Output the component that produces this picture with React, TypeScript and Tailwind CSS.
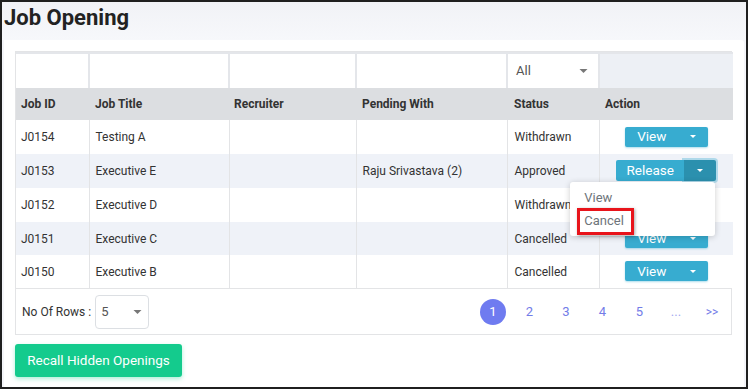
import React from 'react'

interface Opening {
  id: string
  title: string
  recruiter: string
  pending: string
  status: string
  action: string
}

const openings: Opening[] = [
  { id: 'J0154', title: 'Testing A', recruiter: '', pending: '', status: 'Withdrawn', action: 'View' },
  { id: 'J0153', title: 'Executive E', recruiter: '', pending: 'Raju Srivastava (2)', status: 'Approved', action: 'Release' },
  { id: 'J0152', title: 'Executive D', recruiter: '', pending: '', status: 'Withdrawn', action: 'View' },
  { id: 'J0151', title: 'Executive C', recruiter: '', pending: '', status: 'Cancelled', action: 'View' },
  { id: 'J0150', title: 'Executive B', recruiter: '', pending: '', status: 'Cancelled', action: 'View' },
]

const rowHeights = ['h-[34px]', 'h-[34px]', 'h-[34px]', 'h-[33px]', 'h-[33px]']

function Caret({ className }: { className: string }) {
  return (
    <svg width="8" height="4" viewBox="0 0 8 4" className={className}>
      <path d="M0 0 L8 0 L4 4 Z" fill="currentColor" />
    </svg>
  )
}

function SplitButton({ label, open }: { label: string; open: boolean }) {
  if (open) {
    return (
      <div className="relative flex h-[21px] w-[100px]">
        <div className="flex w-[68px] items-center justify-center rounded-l-[2px] bg-[#37acd0] text-[13.5px] text-white">
          {label}
        </div>
        <div className="flex w-[32px] items-center justify-center rounded-r-[2px] bg-[#2b90ae] shadow-[0_0_0_2px_rgba(56,172,208,0.35)]">
          <Caret className="h-[3px] w-[6px] text-white" />
        </div>
        <div className="absolute left-[-46px] top-[22px] z-10 flex h-[54px] w-[145px] flex-col rounded-[3px] bg-white pl-[14px] pt-[8px] text-[13px] text-[#6e747a] shadow-[0_1px_6px_rgba(0,0,0,0.2)]">
          <div className="leading-[16px]">View</div>
          <div className="relative mt-[7px] leading-[16px]">
            Cancel
            <div className="absolute left-[-7px] top-[-5px] h-[27px] w-[57px] border-[3px] border-[#e8141b] shadow-[1px_1px_3px_rgba(0,0,0,0.35)]" />
          </div>
        </div>
      </div>
    )
  }
  return (
    <div className="flex h-[20px] w-[83px] rounded-[2px] bg-[#37acd0] shadow-[0_1px_2px_rgba(55,172,208,0.4)]">
      <div className="flex w-[54px] items-center justify-center text-[13.5px] text-white">{label}</div>
      <div className="flex flex-1 items-center justify-center">
        <Caret className="h-[3px] w-[6px] text-white" />
      </div>
    </div>
  )
}

export default function App() {
  const cols = ['w-[73px]', 'w-[140px]', 'w-[127px]', 'w-[151px]', 'w-[92px]', 'w-[134px]']

  return (
    <div className="box-border h-[389px] w-[748px] overflow-hidden border-2 border-[#1f1f1f] bg-[#f4f5f9] font-['Roboto',sans-serif] text-[#333]">
      <div className="h-[38px] bg-gradient-to-b from-[#f1f2f6] to-[#f7f8fb] pl-[2px] pt-[2px]">
        <h1 className="text-[22px] font-bold leading-[28px] text-[#222]">Job Opening</h1>
      </div>
      <div className="ml-[2px] mr-[2px] h-[347px] rounded-tr-[3px] bg-white pl-[11px] pr-[10px] pt-[11px]">
        <div className="w-[717px] border border-[#e3e4e6]">
          <table className="w-full table-fixed border-collapse text-[12px]">
            <colgroup>
              {cols.map((c, i) => (
                <col key={i} className={c} />
              ))}
            </colgroup>
            <thead>
              <tr className="h-[35px]">
                <th className="border-r-2 border-t-2 border-[#e4e6ea] bg-white" />
                <th className="border-r-2 border-t-2 border-[#e4e6ea] bg-white" />
                <th className="border-r-2 border-t-2 border-[#e4e6ea] bg-white" />
                <th className="border-r-2 border-t-2 border-[#e4e6ea] bg-white" />
                <th className="border-r-2 border-t-2 border-[#e4e6ea] bg-white px-[8px] text-left font-normal">
                  <div className="flex items-center justify-between text-[13px] text-[#555]">
                    <span>All</span>
                    <Caret className="mr-[2px] h-[4px] w-[9px] text-[#777]" />
                  </div>
                </th>
                <th className="border-t-2 border-[#e4e6ea] bg-[#edf0f5]" />
              </tr>
              <tr className="h-[32px] bg-[#dcdee1] text-left">
                <th className="pl-[5px] font-bold">Job ID</th>
                <th className="pl-[6px] font-bold">Job Title</th>
                <th className="pl-[5px] font-bold">Recruiter</th>
                <th className="pl-[6px] font-bold">Pending With</th>
                <th className="pl-[7px] font-bold">Status</th>
                <th className="pl-[6px] font-bold">Action</th>
              </tr>
            </thead>
            <tbody>
              {openings.map((o, i) => (
                <tr key={o.id} className={`${rowHeights[i]} ${i % 2 === 1 ? 'bg-[#eff2f8]' : 'bg-white'}`}>
                  <td className="border-r border-[#e3e4e6] pl-[5px]">{o.id}</td>
                  <td className="border-r border-[#e3e4e6] pl-[6px]">{o.title}</td>
                  <td className="border-r border-[#e3e4e6] pl-[5px]">{o.recruiter}</td>
                  <td className="border-r border-[#e3e4e6] pl-[6px]">{o.pending}</td>
                  <td className="border-r border-[#e3e4e6] pl-[7px]">{o.status}</td>
                  <td className="pb-[1px]">
                    <div className="flex justify-center">
                      <SplitButton label={o.action} open={o.action === 'Release'} />
                    </div>
                  </td>
                </tr>
              ))}
            </tbody>
          </table>
          <div className="flex h-[46px] items-center justify-between border-t border-[#e3e4e6] pl-[6px] pr-[1px]">
            <div className="flex items-center text-[12px]">
              <span className="mr-[4px]">No Of Rows :</span>
              <div className="flex h-[34px] w-[54px] items-center justify-between rounded-[4px] border border-[#dcdfe3] pl-[5px] pr-[6px] text-[13px] text-[#555]">
                <span>5</span>
                <Caret className="h-[4px] w-[9px] text-[#777]" />
              </div>
            </div>
            <div className="flex items-center text-[13px] text-[#737ce8]">
              <div className="mr-[5px] flex h-[26px] w-[26px] items-center justify-center rounded-full bg-[#6f7bf0] text-white">1</div>
              <span className="w-[37px] text-center">2</span>
              <span className="w-[36px] text-center">3</span>
              <span className="w-[37px] text-center">4</span>
              <span className="w-[37px] text-center">5</span>
              <span className="w-[36px] text-center text-[#a5aaf0]">...</span>
              <span className="w-[36px] text-center text-[12px]">&gt;&gt;</span>
            </div>
          </div>
        </div>
        <button className="mt-[9px] h-[33px] w-[167px] rounded-[3px] bg-[#14cb8d] text-[13.5px] text-white shadow-[0_2px_4px_rgba(20,203,141,0.35)]">
          Recall Hidden Openings
        </button>
      </div>
    </div>
  )
}
